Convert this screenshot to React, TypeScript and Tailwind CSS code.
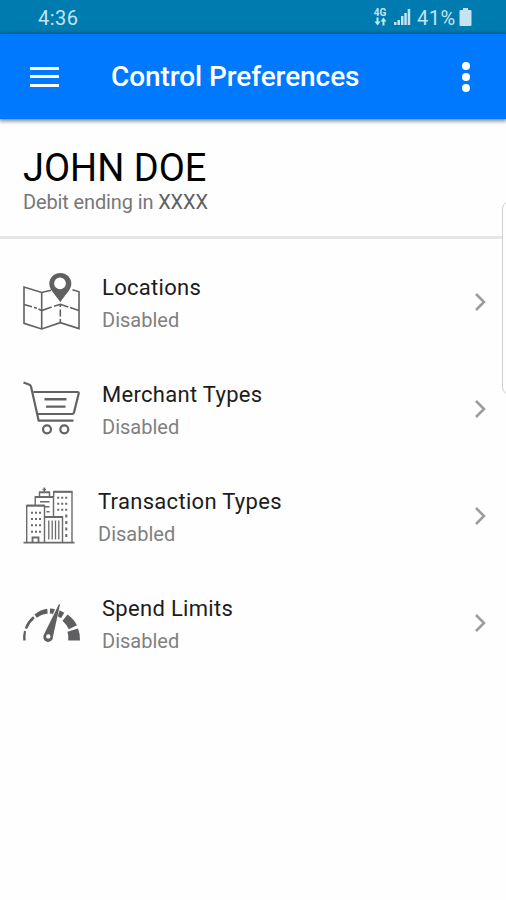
import type { ReactNode } from 'react'

function MapIcon() {
  return (
    <svg width="60" height="64" viewBox="0 0 60 64" fill="none" stroke="#606062" strokeWidth="1.6">
      <path d="M29 20.3 19.7 22.5 2 17v36.3L19.7 59l18.6-6.3L57 58.6V21.8l-6.5-2" />
      <path d="M19.7 22.5V59" />
      <path d="M2 34.5l8 2.3M12 37.4l3 .9M16.5 39l3.2 1.6 10-3.6M32 36.3l6.3-2 8 2.7M48 37.6l9 3" />
      <path d="M38.3 34v3M38.3 39.5v7M38.3 49v3.7" />
      <path
        d="M38.3 2.9a11 11 0 0 0-11 11c0 6 7 11.5 11 18.3 4-6.8 11-12.3 11-18.3a11 11 0 0 0-11-11zm-.3 4.6a5.9 5.9 0 1 1 0 11.8 5.9 5.9 0 0 1 0-11.8z"
        fill="#606062"
        stroke="none"
        fillRule="evenodd"
      />
    </svg>
  )
}

function CartIcon() {
  return (
    <svg width="60" height="64" viewBox="0 0 60 64" fill="none" stroke="#626264" strokeWidth="2.2" strokeLinejoin="round">
      <path d="M1.5 5.5 7 7.5Q8.5 8 9 9.5L16.7 43.7H51.5" />
      <path d="M11.3 15H55.5Q57 15 56.7 16.5L52 35.5Q51.6 37 50 37H15" />
      <path d="M22.5 22.2H44.5M24 29.6H43.5" strokeWidth="2.4" />
      <circle cx="25" cy="52.3" r="4" />
      <circle cx="42.3" cy="52.3" r="4" />
    </svg>
  )
}

function BuildingsIcon() {
  return (
    <svg width="60" height="64" viewBox="0 0 60 64" fill="none" stroke="#6a6a6c" strokeWidth="1.4">
      <path d="M1.5 58.7H52.5" strokeWidth="1.8" />
      <path d="M4.7 58.5V21.7H22.5V58.5M13.2 21.5V13H31.5V32.5M31.7 13V7.7H50V58.5M22.5 32.8H40.5V58.5" />
      <path d="M4.5 21.5H22.7M13 13H31.5M31.5 7.7H50.2M17 8.3H28M22.5 33H40.5" strokeWidth="2" />
      <path d="M17.5 12.5V8M27.5 12.5V8M22.3 3.5V8M20.5 5.5H24" />
      <path d="M18 17.7H27.5M22 22.7H27.5M24.5 27.7H27.5" strokeWidth="1.6" />
      <path d="M26.8 36.5V55.5M30.2 36.5V55.5M33.5 36.5V55.5M36.8 36.5V55.5" strokeWidth="1.3" />
      <path d="M10.5 58.5V53.5H16.5V58.5" strokeWidth="1.8" />
      <path
        d="M9 28.7H19M9 35H19M9 41.3H19M9 47.7H19M35.2 13.7H45.5M35.2 19.7H45.5M35.2 25.7H45.5"
        strokeWidth="2"
        strokeDasharray="2 2"
      />
      <path d="M44.3 30.5v3M44.3 37v3M44.3 43.5v3M44.3 50v3" strokeWidth="2" />
    </svg>
  )
}

function GaugeIcon() {
  return (
    <svg width="60" height="64" viewBox="0 0 60 64" fill="#5f5f61">
      <path d="M2 39.8 4 40.3Q3.3 44.5 3.6 49.5H1.2Q.8 44.5 2 39.8z" />
      <path d="M2.8 37Q5.5 30 11 25.3L12.7 27.3Q7.5 32 5 38z" />
      <path d="M12.6 23.5Q18.5 18.6 25.2 17.8L25.7 22.6Q20 23.2 14.7 26.8z" />
      <path d="M28 17.5Q31 17.5 33 18.2L31 23Q29.5 22.5 27.8 22.6z" />
      <path d="M37.5 19.3 42.3 21.8 39 27.3 35.8 25.3z" />
      <path d="M45.5 23.5Q52 28.2 55 34.3L46.8 38.3Q44.5 33.5 40.5 29.8z" />
      <path d="M56 37.5Q58.3 43 58 49.5H46.2Q46.5 44.5 45.5 40.8z" />
      <path d="M37 13 38 13.4 31 45.6A4.9 4.9 0 1 1 22.1 43.2z" />
      <circle cx="26.3" cy="45.4" r="2.2" fill="#fff" />
    </svg>
  )
}

function StatusBar() {
  return (
    <div className="flex h-[34px] items-center bg-[#007bb0] pr-[34px] pl-[38px] text-[20px] text-[#c4e4f1]">
      <span className="pt-[2px] tracking-[0.5px]">4:36</span>
      <div className="ml-auto flex items-center">
        <div className="mr-[1px] flex w-[14px] flex-col items-center">
          <span className="text-[10px] leading-[9px] font-bold">4G</span>
          <svg width="13" height="9" viewBox="0 0 13 9" fill="currentColor">
            <path d="M2.5 0.5h2v4h2L3.5 8.5.5 4.5h2zM8.5 8.5h2v-4h2L9.5.5l-3 4h2z" />
          </svg>
        </div>
        <svg className="ml-[6px]" width="17" height="18" viewBox="0 0 17 18" fill="currentColor">
          <path d="M0 14h2.5v3H0zM3.5 12H6v5H3.5zM7 8h2.5v9H7zM10.3 5h2.5v12h-2.5zM13.7 1h2.5v16h-2.5z" />
        </svg>
        <span className="ml-[6px] w-[40px] pt-[2px] tracking-[0.5px]">41%</span>
        <svg className="ml-[2px]" width="13" height="18" viewBox="0 0 13 18" fill="currentColor">
          <path d="M4 0h5v2h2.5q1 0 1 1v14q0 1-1 1h-10q-1 0-1-1V3q0-1 1-1H4z" />
        </svg>
      </div>
    </div>
  )
}

function AppBar() {
  return (
    <div className="flex h-[85px] items-center bg-[#0079ff] pr-[36px] pl-[30px] text-white shadow-[0_1px_4px_1px_rgba(0,0,0,0.5)]">
      <div className="flex w-[29px] flex-col gap-[5.5px]">
        <div className="h-[3px] bg-white" />
        <div className="h-[3px] bg-white" />
        <div className="h-[3px] bg-white" />
      </div>
      <h1 className="ml-[52px] text-[28px] font-medium tracking-[-0.08px]">Control Preferences</h1>
      <div className="ml-auto flex flex-col gap-[3px]">
        <div className="size-[8px] rounded-full bg-white" />
        <div className="size-[8px] rounded-full bg-white" />
        <div className="size-[8px] rounded-full bg-white" />
      </div>
    </div>
  )
}

type RowProps = { icon: ReactNode; title: string; labelClass?: string }

function PreferenceRow({ icon, title, labelClass = 'ml-[20px]' }: RowProps) {
  return (
    <div className="flex h-[107px] items-center pr-[19px] pl-[22px]">
      {icon}
      <div className={labelClass}>
        <div className="pt-[5px] text-[22px] leading-[33px] tracking-[0.3px] text-[#1c1c1c]">{title}</div>
        <div className="text-[20px] leading-[33px] text-[#808080]">Disabled</div>
      </div>
      <svg className="ml-auto" width="13" height="20" viewBox="0 0 13 20" fill="none" stroke="#9b9b9b" strokeWidth="2.5">
        <path d="M2 2l8 8-8 8" />
      </svg>
    </div>
  )
}

export default function App() {
  return (
    <div className="relative h-[900px] w-[506px] overflow-hidden bg-[#fefefe] font-['Roboto',sans-serif]">
      <StatusBar />
      <AppBar />
      <div className="h-[120px] border-b-[3px] border-[#e6e6e6] pt-[27px] pl-[23px]">
        <div className="text-[38px] leading-[44px] text-black">JOHN DOE</div>
        <div className="text-[20px] leading-[24px] tracking-[-0.13px] text-[#777]">
          Debit ending in <span className="text-[#606060]">XXXX</span>
        </div>
      </div>
      <div className="pt-[9px]">
        <PreferenceRow icon={<MapIcon />} title="Locations" />
        <PreferenceRow icon={<CartIcon />} title="Merchant Types" />
        <PreferenceRow icon={<BuildingsIcon />} title="Transaction Types" labelClass="ml-[16px]" />
        <PreferenceRow icon={<GaugeIcon />} title="Spend Limits" />
      </div>
      {/* edge panel handle peeking in from the right */}
      <div className="absolute top-[201px] left-[502px] h-[194px] w-[20px] rounded-[8px] border border-[#cfcfcf] bg-[#fefefe]" />
    </div>
  )
}
